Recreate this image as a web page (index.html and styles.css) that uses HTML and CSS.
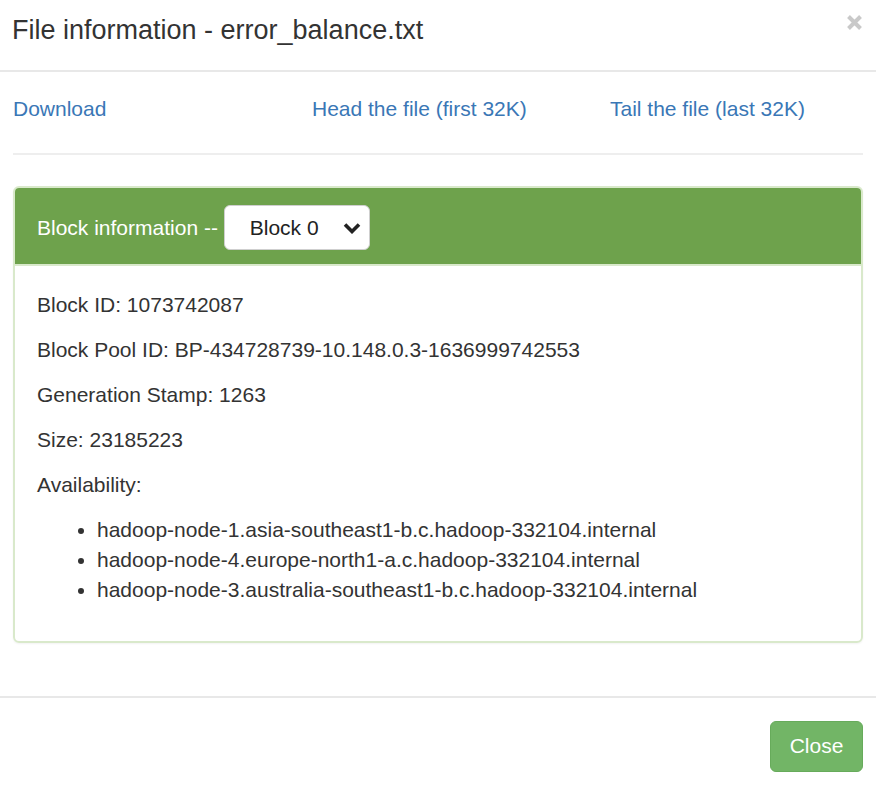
FILE: index.html
```html
<!DOCTYPE html>
<html lang="en">
<head>
<meta charset="utf-8">
<title>File information - error_balance.txt</title>
<link rel="stylesheet" href="styles.css">
</head>
<body>
<div class="modal">
  <div class="modal-header">
    <h4 class="modal-title">File information - error_balance.txt</h4>
    <button class="close" type="button" aria-label="Close">
      <svg width="17" height="17" viewBox="0 0 17 17"><path d="M2.5 2.5 L14.5 14.5 M14.5 2.5 L2.5 14.5" stroke="#c9c9c9" stroke-width="4" stroke-linecap="butt" fill="none"/></svg>
    </button>
  </div>
  <div class="modal-body">
    <div class="links">
      <a href="#" class="link">Download</a>
      <a href="#" class="link">Head the file (first 32K)</a>
      <a href="#" class="link">Tail the file (last 32K)</a>
    </div>
    <hr class="divider">
    <div class="panel">
      <div class="panel-heading">
        <span class="panel-title">Block information -- </span>
        <div class="select">
          <span>Block 0</span>
          <svg width="18" height="12" viewBox="0 0 18 12"><path d="M2 2.5 L9 9.5 L16 2.5" stroke="#222" stroke-width="3.6" fill="none" stroke-linejoin="miter"/></svg>
        </div>
      </div>
      <div class="panel-body">
        <p>Block ID: 1073742087</p>
        <p>Block Pool ID: BP-434728739-10.148.0.3-1636999742553</p>
        <p>Generation Stamp: 1263</p>
        <p>Size: 23185223</p>
        <p>Availability:</p>
        <ul>
          <li>hadoop-node-1.asia-southeast1-b.c.hadoop-332104.internal</li>
          <li>hadoop-node-4.europe-north1-a.c.hadoop-332104.internal</li>
          <li>hadoop-node-3.australia-southeast1-b.c.hadoop-332104.internal</li>
        </ul>
      </div>
    </div>
  </div>
  <div class="modal-footer">
    <button class="btn-close" type="button">Close</button>
  </div>
</div>
</body>
</html>
```

FILE: styles.css
```css
* { box-sizing: border-box; }
html, body {
  margin: 0;
  padding: 0;
  background: #fff;
}
body {
  font-family: "Liberation Sans", Arial, Helvetica, sans-serif;
  font-size: 21px;
  line-height: 30px;
  color: #333;
}
.modal {
  width: 876px;
}
.modal-header {
  display: flex;
  align-items: flex-start;
  height: 72px;
  padding: 15px 13px 0 12px;
  border-bottom: 2px solid #e8e8e8;
}
.modal-title {
  margin: 0;
  font-size: 27px;
  font-weight: normal;
  line-height: 30px;
  color: #333;
}
.close {
  margin-left: auto;
  margin-top: -1px;
  padding: 0;
  border: 0;
  background: none;
  width: 17px;
  height: 17px;
  display: block;
}
.close svg { display: block; }
.modal-body {
  padding: 22px 13px 23px 13px;
}
.links {
  display: grid;
  grid-template-columns: 299px 298px 253px;
}
.link {
  color: #3a77b6;
  text-decoration: none;
  justify-self: start;
}
.divider {
  border: 0;
  border-top: 2px solid #eeeeee;
  margin: 29px 0 31px 0;
  height: 0;
}
.panel {
  border: 2px solid #d9e9cb;
  border-radius: 6px;
  overflow: hidden;
  box-shadow: 0 1px 2px rgba(0,0,0,0.05);
  margin-bottom: 30px;
}
.panel-heading {
  display: flex;
  align-items: center;
  background: #6ea24c;
  color: #fff;
  padding: 17px 22px 14px 22px;
  border-bottom: 2px solid #d9e9cb;
}
.panel-title {
  white-space: pre;
}
.select {
  display: flex;
  align-items: center;
  justify-content: space-between;
  width: 146px;
  height: 45px;
  padding: 0 8px 0 25px;
  background: #fff;
  color: #222;
  border: 1.5px solid #cfcfcf;
  border-radius: 6px;
}
.select svg { display: block; }
.panel-body {
  padding: 24px 22px 21px 22px;
}
.panel-body p {
  margin: 0 0 15px 0;
}
.panel-body ul {
  margin: 0 0 15px 0;
  padding-left: 60px;
}
.modal-footer {
  display: flex;
  justify-content: flex-end;
  border-top: 2px solid #e8e8e8;
  padding: 23px 13px 0 13px;
}
.btn-close {
  font-family: "Liberation Sans", Arial, Helvetica, sans-serif;
  font-size: 21px;
  line-height: 30px;
  color: #fff;
  background: #72b566;
  border: 1.5px solid #67ab5b;
  border-radius: 6px;
  padding: 9px 18px 10px 18px;
  width: 93px;
}
```
